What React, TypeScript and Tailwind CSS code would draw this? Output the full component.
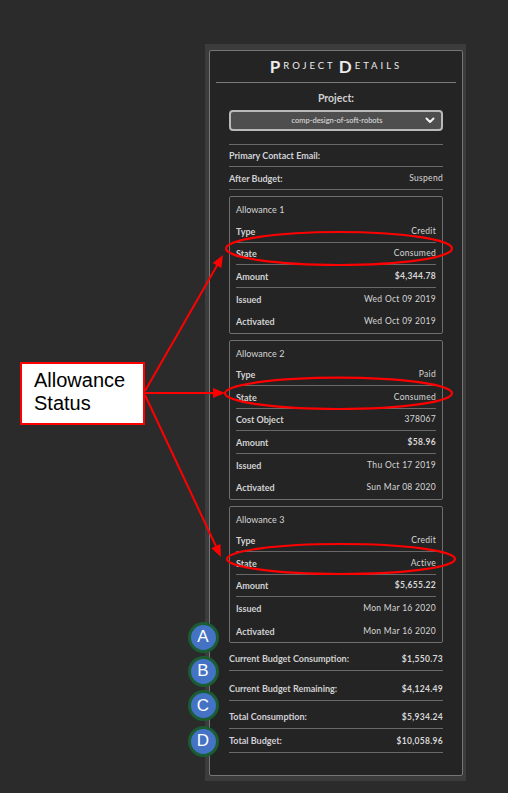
import React from "react";

type RowProps = { label: string; value?: string; border?: boolean; strong?: boolean };

function BoxRow({ label, value, border = true, strong = false }: RowProps) {
  return (
    <div
      className={
        border
          ? "flex h-[22.5px] items-center justify-between border-b border-[#686868] pt-[1px]"
          : "flex h-[22.5px] items-center justify-between pt-[1px]"
      }
    >
      <span className="text-[9px] font-bold text-[#d2d2d2]">{label}</span>
      <span
        className={
          strong
            ? "text-[8.5px] font-bold tracking-[0.3px] text-[#d6d6d6]"
            : "text-[8.5px] tracking-[0.3px] text-[#d6d6d6]"
        }
      >
        {value}
      </span>
    </div>
  );
}

type Allowance = {
  title: string;
  rows: { label: string; value: string; border: boolean; strong?: boolean }[];
};

const allowances: Allowance[] = [
  {
    title: "Allowance 1",
    rows: [
      { label: "Type", value: "Credit", border: true },
      { label: "State", value: "Consumed", border: true },
      { label: "Amount", value: "$4,344.78", border: true, strong: true },
      { label: "Issued", value: "Wed Oct 09 2019", border: false },
      { label: "Activated", value: "Wed Oct 09 2019", border: false },
    ],
  },
  {
    title: "Allowance 2",
    rows: [
      { label: "Type", value: "Paid", border: true },
      { label: "State", value: "Consumed", border: true },
      { label: "Cost Object", value: "378067", border: true },
      { label: "Amount", value: "$58.96", border: true, strong: true },
      { label: "Issued", value: "Thu Oct 17 2019", border: false },
      { label: "Activated", value: "Sun Mar 08 2020", border: false },
    ],
  },
  {
    title: "Allowance 3",
    rows: [
      { label: "Type", value: "Credit", border: true },
      { label: "State", value: "Active", border: true },
      { label: "Amount", value: "$5,655.22", border: true, strong: true },
      { label: "Issued", value: "Mon Mar 16 2020", border: false },
      { label: "Activated", value: "Mon Mar 16 2020", border: false },
    ],
  },
];

function AllowanceBox({ a }: { a: Allowance }) {
  return (
    <div className="mx-[19px] mt-[6px] rounded-[2px] border border-[#6e6e6e] px-[6px]">
      <div className="flex h-[23px] items-center pt-[3px] text-[9px] text-[#d4d4d4]">{a.title}</div>
      {a.rows.map((r, i) => (
        <BoxRow key={i} label={r.label} value={r.value} border={r.border} strong={r.strong} />
      ))}
    </div>
  );
}

function Arrow({ x1, y1, x2, y2 }: { x1: number; y1: number; x2: number; y2: number }) {
  const dx = x2 - x1;
  const dy = y2 - y1;
  const len = Math.sqrt(dx * dx + dy * dy);
  const ux = dx / len;
  const uy = dy / len;
  const hl = 12;
  const hw = 5;
  const bx = x2 - ux * hl;
  const by = y2 - uy * hl;
  const px = -uy;
  const py = ux;
  const pts = `${x2},${y2} ${bx + px * hw},${by + py * hw} ${bx - px * hw},${by - py * hw}`;
  return (
    <g>
      <line x1={x1} y1={y1} x2={bx + ux * 2} y2={by + uy * 2} stroke="#ff0000" strokeWidth={2} />
      <polygon points={pts} fill="#ff0000" />
    </g>
  );
}

export default function App() {
  return (
    <div className="relative min-h-[793px] w-full bg-[#2b2b2b] font-[Lato,sans-serif]">
      <div className="pl-[205px] pt-[44px]">
        <div className="w-[261px] bg-[#3b3c3b] pb-[5px] pl-[4px] pr-[3px] pt-[6px]">
          <div className="rounded-[2px] border border-[#767676] bg-[#242424] pb-[22px]">
            <div className="mx-[6px] flex h-[32px] items-center justify-center border-b border-[#7a7a7a] pb-[1px] tracking-[3px] text-[#ececec]">
              <span className="text-[17px] font-bold leading-none">P</span>
              <span className="text-[9.5px] leading-none">ROJECT</span>
              <span className="ml-[3px] text-[17px] font-bold leading-none">D</span>
              <span className="text-[9.5px] leading-none">ETAILS</span>
            </div>
            <div className="mt-[8px] text-center text-[10.5px] font-bold leading-[14px] text-[#d0d0d0]">
              Project:
            </div>
            <div className="mx-[19px] mt-[5px] flex h-[21px] items-center justify-between rounded-[4px] border-2 border-[#b9b9b9] bg-[#4e4e4e] pl-[8px] pr-[6px]">
              <span className="w-[10px]" />
              <span className="text-[7.5px] text-[#e0e0e0]">comp-design-of-soft-robots</span>
              <svg width="10" height="7" viewBox="0 0 10 7">
                <polyline points="1.5,1.5 5,5 8.5,1.5" fill="none" stroke="#f2f2f2" strokeWidth="2" strokeLinecap="round" strokeLinejoin="round" />
              </svg>
            </div>
            <div className="mx-[19px] mt-[13px] border-t border-[#6a6a6a]" />
            <div className="mx-[19px] flex h-[22px] items-center justify-between border-b border-[#6a6a6a] pt-[1px]">
              <span className="text-[9px] font-bold text-[#cfd3d8]">Primary Contact Email:</span>
            </div>
            <div className="mx-[19px] flex h-[23px] items-center justify-between border-b border-[#6a6a6a] pt-[1px]">
              <span className="text-[9px] font-bold text-[#d0d0d0]">After Budget:</span>
              <span className="text-[8.5px] tracking-[0.3px] text-[#d6d6d6]">Suspend</span>
            </div>
            {allowances.map((a, i) => (
              <AllowanceBox key={i} a={a} />
            ))}
            <div className="mx-[19px] mt-[5px] flex h-[23px] items-center justify-between border-b border-[#6a6a6a]">
              <span className="text-[9px] font-bold text-[#d0d0d0]">Current Budget Consumption:</span>
              <span className="text-[8.5px] font-bold tracking-[0.3px] text-[#d6d6d6]">$1,550.73</span>
            </div>
            <div className="mx-[19px] mt-[7px] flex h-[23px] items-center justify-between border-b border-[#6a6a6a]">
              <span className="text-[9px] font-bold text-[#d0d0d0]">Current Budget Remaining:</span>
              <span className="text-[8.5px] font-bold tracking-[0.3px] text-[#d6d6d6]">$4,124.49</span>
            </div>
            <div className="mx-[19px] mt-[5px] flex h-[23px] items-center justify-between border-b border-[#6a6a6a]">
              <span className="text-[9px] font-bold text-[#d2cfd8]">Total Consumption:</span>
              <span className="text-[8.5px] font-bold tracking-[0.3px] text-[#d6d6d6]">$5,934.24</span>
            </div>
            <div className="mx-[19px] mt-[1px] flex h-[23px] items-center justify-between border-b border-[#6a6a6a]">
              <span className="text-[9px] font-bold text-[#d2cfd8]">Total Budget:</span>
              <span className="text-[8.5px] font-bold tracking-[0.3px] text-[#d6d6d6]">$10,058.96</span>
            </div>
          </div>
        </div>
      </div>

      <svg className="pointer-events-none absolute left-0 top-0" width="508" height="793" viewBox="0 0 508 793">
        <ellipse cx="339" cy="248.5" rx="113" ry="16.5" fill="none" stroke="#ff0000" strokeWidth="2.2" />
        <ellipse cx="338.5" cy="393.3" rx="113.5" ry="15.7" fill="none" stroke="#ff0000" strokeWidth="2.2" />
        <ellipse cx="341" cy="559" rx="114" ry="15" fill="none" stroke="#ff0000" strokeWidth="2.2" />
        <Arrow x1={145} y1={391} x2={223} y2={255} />
        <Arrow x1={145} y1={393} x2={225} y2={393} />
        <Arrow x1={145} y1={395} x2={221} y2={557} />
      </svg>

      <div className="absolute left-[20px] top-[362px] h-[63px] w-[125px] border-2 border-[#ff0000] bg-white pl-[12px] pt-[5px] font-['Liberation_Sans',Arial,sans-serif] text-[20px] leading-[22.5px] text-black">
        <div>Allowance</div>
        <div>Status</div>
      </div>

      <div className="absolute left-[187.5px] top-[621.5px] flex h-[31px] w-[31px] items-center justify-center rounded-full border-[3px] border-[#1b5c33] bg-[#4472c4] font-['Liberation_Sans',Arial,sans-serif] text-[17px] text-white">A</div>
      <div className="absolute left-[187.5px] top-[655.5px] flex h-[31px] w-[31px] items-center justify-center rounded-full border-[3px] border-[#1b5c33] bg-[#4472c4] font-['Liberation_Sans',Arial,sans-serif] text-[17px] text-white">B</div>
      <div className="absolute left-[187.5px] top-[690px] flex h-[31px] w-[31px] items-center justify-center rounded-full border-[3px] border-[#1b5c33] bg-[#4472c4] font-['Liberation_Sans',Arial,sans-serif] text-[17px] text-white">C</div>
      <div className="absolute left-[187.5px] top-[725.5px] flex h-[31px] w-[31px] items-center justify-center rounded-full border-[3px] border-[#1b5c33] bg-[#4472c4] font-['Liberation_Sans',Arial,sans-serif] text-[17px] text-white">D</div>
    </div>
  );
}
